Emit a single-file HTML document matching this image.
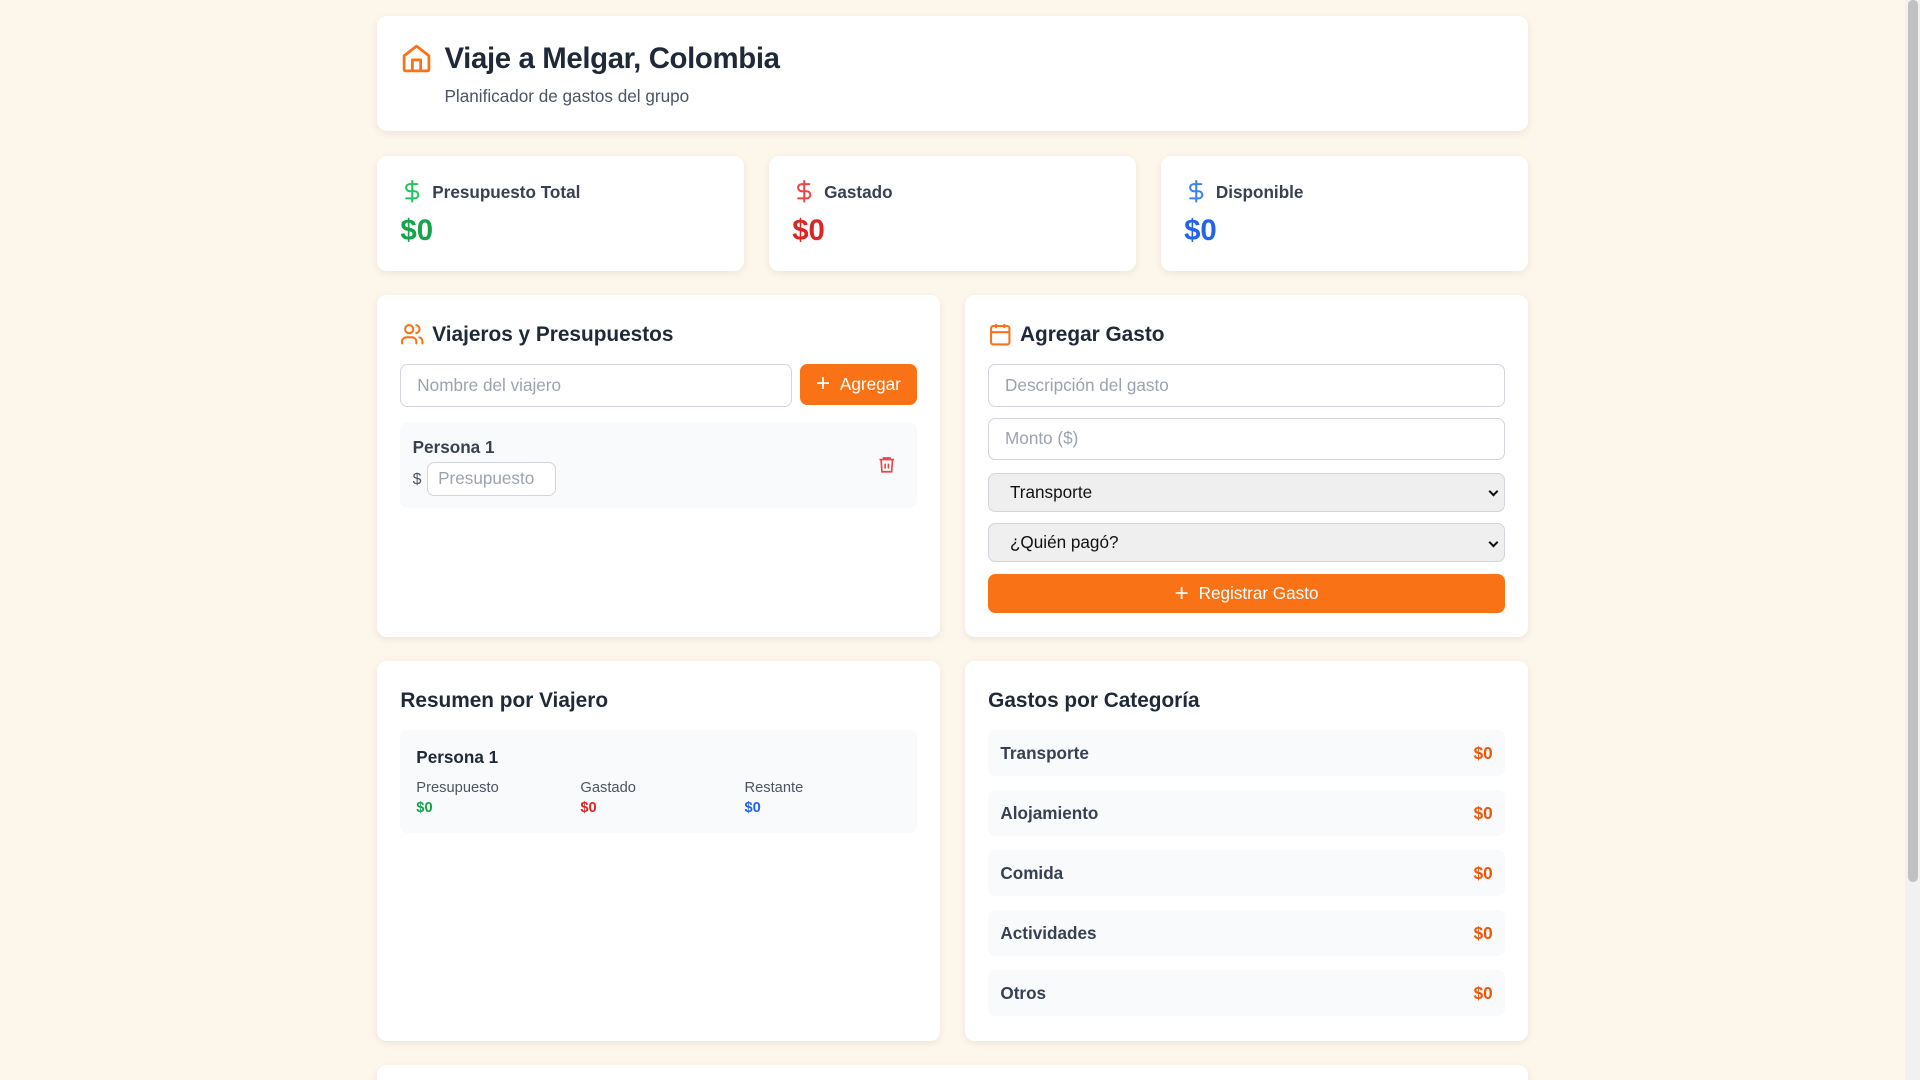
<!DOCTYPE html>
<html><head><meta charset="utf-8"><style>
html,body{margin:0;padding:0;overflow:hidden}
body{width:1920px;height:1080px;background:#fdf6ea;font-family:"Liberation Sans",sans-serif;color:#1f2937;position:relative}
#w{zoom:1.22449;position:absolute;left:0;top:0;width:1568px;height:882px}
.c{position:absolute;background:#fff;border-radius:8px;box-shadow:0 2px 6px rgba(0,0,0,.07)}
.a{position:absolute}
.inp{position:absolute;border:1px solid #d1d5db;border-radius:6px;background:#fff;color:#9ca3af;font-size:14px;box-sizing:border-box;padding-left:13px;display:flex;align-items:center}
.sel{position:absolute;border:1px solid #d1d5db;border-radius:6px;background:#efefef;color:#111;font-size:14px;box-sizing:border-box;padding-left:17px;display:flex;align-items:center}
.sel:after{content:"";position:absolute;right:6px;top:12px;width:4px;height:4px;border-right:2px solid #111;border-bottom:2px solid #111;transform:rotate(45deg)}
.btn{position:absolute;background:#f97316;color:#fff;border-radius:6px;font-size:14px;display:flex;align-items:center;justify-content:center;gap:8px}
h2{margin:0;font-size:17px;font-weight:bold;position:absolute}
.row{position:absolute;left:19px;width:422px;height:38px;background:#f9fafb;border-radius:6px;font-size:14px;font-weight:bold}
.row span{position:absolute;top:11px}
</style></head><body><div id="w">
<div class="c" style="left:308px;top:13px;width:940px;height:94px">
<svg class="a" style="left:19px;top:21px" width="27" height="27" viewBox="0 0 24 24" fill="none" stroke="#f97316" stroke-width="2" stroke-linejoin="round"><path d="M3 10l9-7 9 7v10a1 1 0 0 1-1 1H4a1 1 0 0 1-1-1z"/><path d="M9 21v-8h6v8"/></svg>
<div class="a" style="left:55px;top:21px;font-size:24px;font-weight:bold;letter-spacing:-0.3px">Viaje a Melgar, Colombia</div>
<div class="a" style="left:55px;top:57px;font-size:14px;color:#4b5563">Planificador de gastos del grupo</div>
</div>
<div class="c" style="left:308px;top:127px;width:300px;height:94px">
<svg class="a" style="left:19px;top:19px" width="20" height="20" viewBox="0 0 24 24" fill="none" stroke="#22c55e" stroke-width="2" stroke-linecap="round"><path d="M12 2v20M17 5H9.5a3.5 3.5 0 0 0 0 7h5a3.5 3.5 0 0 1 0 7H6"/></svg>
<div class="a" style="left:45px;top:22px;font-size:14px;font-weight:bold;color:#374151">Presupuesto Total</div>
<div class="a" style="left:19px;top:48px;font-size:24px;font-weight:bold;color:#16a34a">$0</div></div>
<div class="c" style="left:628px;top:127px;width:300px;height:94px">
<svg class="a" style="left:19px;top:19px" width="20" height="20" viewBox="0 0 24 24" fill="none" stroke="#ef4444" stroke-width="2" stroke-linecap="round"><path d="M12 2v20M17 5H9.5a3.5 3.5 0 0 0 0 7h5a3.5 3.5 0 0 1 0 7H6"/></svg>
<div class="a" style="left:45px;top:22px;font-size:14px;font-weight:bold;color:#374151">Gastado</div>
<div class="a" style="left:19px;top:48px;font-size:24px;font-weight:bold;color:#dc2626">$0</div></div>
<div class="c" style="left:948px;top:127px;width:300px;height:94px">
<svg class="a" style="left:19px;top:19px" width="20" height="20" viewBox="0 0 24 24" fill="none" stroke="#3b82f6" stroke-width="2" stroke-linecap="round"><path d="M12 2v20M17 5H9.5a3.5 3.5 0 0 0 0 7h5a3.5 3.5 0 0 1 0 7H6"/></svg>
<div class="a" style="left:45px;top:22px;font-size:14px;font-weight:bold;color:#374151">Disponible</div>
<div class="a" style="left:19px;top:48px;font-size:24px;font-weight:bold;color:#2563eb">$0</div></div>

<div class="c" style="left:308px;top:241px;width:460px;height:279px">
<svg class="a" style="left:19px;top:22px" width="20" height="20" viewBox="0 0 24 24" fill="none" stroke="#f97316" stroke-width="2" stroke-linecap="round"><circle cx="9" cy="7" r="4"/><path d="M2 21v-2a4 4 0 0 1 4-4h6a4 4 0 0 1 4 4v2M16 3.1a4 4 0 0 1 0 7.8M22 21v-2a4 4 0 0 0-3-3.9"/></svg>
<h2 style="left:45px;top:23px">Viajeros y Presupuestos</h2>
<div class="inp" style="left:19px;top:56px;width:320px;height:35px">Nombre del viajero</div>
<div class="btn" style="left:345px;top:56px;width:96px;height:34px"><span style="font-size:20px;font-weight:300">+</span>Agregar</div>
<div class="a" style="left:19px;top:104px;width:422px;height:70px;background:#f9fafb;border-radius:6px">
<div class="a" style="left:10px;top:12px;font-size:14px;font-weight:bold;color:#374151">Persona 1</div>
<div class="a" style="left:10px;top:40px;font-size:13px;color:#4b5563">$</div>
<div class="inp" style="left:22px;top:32px;width:105px;height:28px;padding-left:8px">Presupuesto</div>
<svg class="a" style="left:389px;top:26px" width="16" height="17" viewBox="0 0 24 24" fill="none" stroke="#ef4444" stroke-width="2"><path d="M3 6h18M8 6V4h8v2M5 6l1 15h12l1-15M10 11v6M14 11v6"/></svg>
</div></div>

<div class="c" style="left:788px;top:241px;width:460px;height:279px">
<svg class="a" style="left:19px;top:22px" width="20" height="20" viewBox="0 0 24 24" fill="none" stroke="#f97316" stroke-width="2"><rect x="3" y="4" width="18" height="18" rx="2"/><path d="M16 2v4M8 2v4M3 10h18"/></svg>
<h2 style="left:45px;top:23px">Agregar Gasto</h2>
<div class="inp" style="left:19px;top:56px;width:422px;height:35px">Descripción del gasto</div>
<div class="inp" style="left:19px;top:100px;width:422px;height:35px">Monto ($)</div>
<div class="sel" style="left:19px;top:145px;width:422px;height:32px">Transporte</div>
<div class="sel" style="left:19px;top:186px;width:422px;height:32px">¿Quién pagó?</div>
<div class="btn" style="left:19px;top:228px;width:422px;height:32px"><span style="font-size:20px;font-weight:300">+</span>Registrar Gasto</div>
</div>

<div class="c" style="left:308px;top:540px;width:460px;height:310px">
<h2 style="left:19px;top:23px">Resumen por Viajero</h2>
<div class="a" style="left:19px;top:56px;width:422px;height:84px;background:#f9fafb;border-radius:6px;font-size:12px;color:#4b5563">
<div class="a" style="left:13px;top:14px;font-size:14px;font-weight:bold;color:#1f2937">Persona 1</div>
<div class="a" style="left:13px;top:41px">Presupuesto</div><div class="a" style="left:13px;top:57px;font-weight:bold;color:#16a34a">$0</div>
<div class="a" style="left:147px;top:41px">Gastado</div><div class="a" style="left:147px;top:57px;font-weight:bold;color:#dc2626">$0</div>
<div class="a" style="left:281px;top:41px">Restante</div><div class="a" style="left:281px;top:57px;font-weight:bold;color:#2563eb">$0</div>
</div></div>

<div class="c" style="left:788px;top:540px;width:460px;height:310px">
<h2 style="left:19px;top:23px">Gastos por Categoría</h2>
<div class="row" style="top:56px"><span style="left:10px;color:#374151">Transporte</span><span style="right:10px;color:#ea580c">$0</span></div>
<div class="row" style="top:105px"><span style="left:10px;color:#374151">Alojamiento</span><span style="right:10px;color:#ea580c">$0</span></div>
<div class="row" style="top:154px"><span style="left:10px;color:#374151">Comida</span><span style="right:10px;color:#ea580c">$0</span></div>
<div class="row" style="top:203px"><span style="left:10px;color:#374151">Actividades</span><span style="right:10px;color:#ea580c">$0</span></div>
<div class="row" style="top:252px"><span style="left:10px;color:#374151">Otros</span><span style="right:10px;color:#ea580c">$0</span></div>
</div>
<div class="c" style="left:308px;top:870px;width:940px;height:40px"></div>
<div class="a" style="left:1556px;top:0;width:12px;height:882px;background:#f1f1f1"></div>
<div class="a" style="left:1558px;top:0;width:8px;height:720px;background:#c1c1c1;border-radius:4px"></div>
</div></body></html>
